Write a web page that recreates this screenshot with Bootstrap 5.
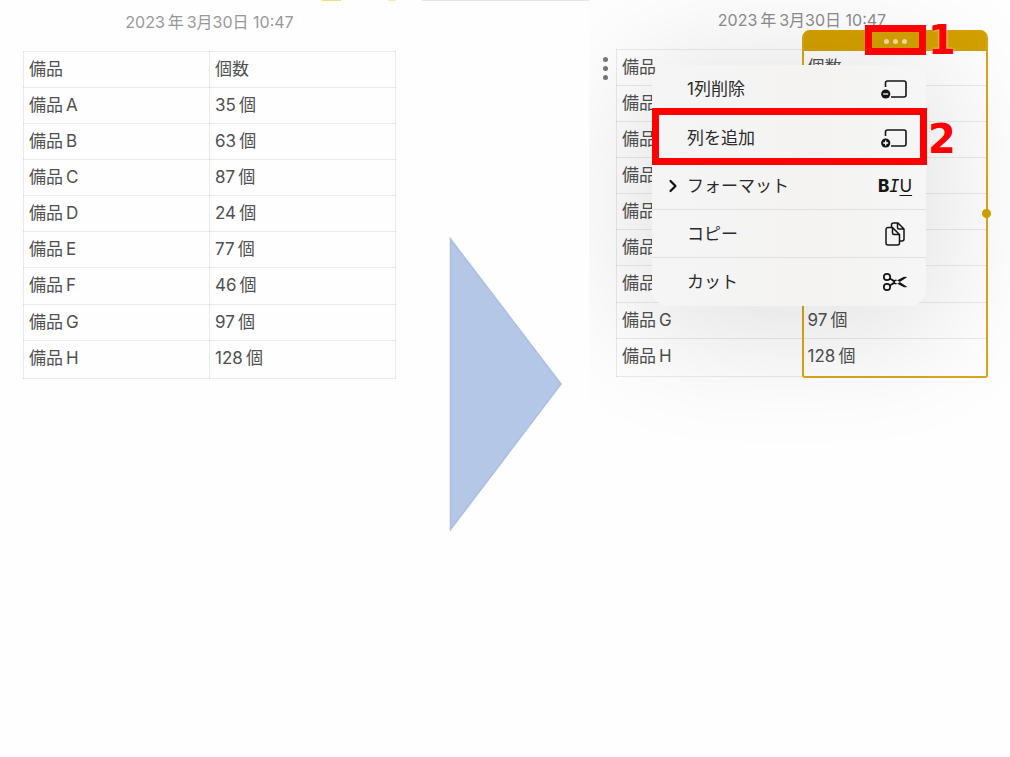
<!DOCTYPE html>
<html lang="ja">
<head>
<meta charset="utf-8">
<meta name="viewport" content="width=device-width, initial-scale=1">
<title>表に列を追加する</title>
<link href="https://cdn.jsdelivr.net/npm/bootstrap@5.3.0/dist/css/bootstrap.min.css" rel="stylesheet">
<style>
  body { font-family: Inter, "Noto Sans CJK JP", sans-serif; font-size: 17px; line-height: 24px; color: #505050; background: #fefefe; }
  .steps { display: grid; grid-template-columns: 422fr 167fr 421fr; min-height: 100vh; }
  .note-before { padding: 0 26px 0 23px; }
  .note-after { padding: 0 22px 0 27px; }
  .note-date { font-size: 16px; color: #98989a; line-height: 24px; padding: 10px 0 17px; }
  .note-after .note-date { padding: 8px 0 17px; color: #8c8c8e; }
  .toolbar-edge { height: 1px; right: 26px; gap: 47px; }
  .toolbar-edge span { width: 19px; background: #f5dc7c; }
  .toolbar-edge span + span { width: 8px; background: #fbe6b4; }
  .sheet { table-layout: fixed; border-collapse: collapse; width: 100%; color: inherit; }
  .sheet th, .sheet td { height: 36px; padding: 0 5px 2px; border: 1px solid rgba(0,0,0,.08); font-weight: 400; vertical-align: middle; }
  .sheet tbody tr:nth-child(6) td { height: 37px; }
  .sheet tr:last-child td { height: 38px; padding-bottom: 4px; }
  .divider-edge { border-top: 1px solid #e6e6e6; }
  .arrow { margin: 235px 27px 0 27px; }
  .arrow svg { display: block; width: 100%; height: 298px; }
  .col-frame { top: -19px; bottom: -1px; left: 50%; right: 0; border: 2px solid #d9a61a; border-radius: 8px 8px 3px 3px; }
  .col-head { height: 19px; background: #d4a000; border: 0; padding: 0; border-radius: 6px 6px 0 0; box-shadow: 0 -2px 0 #d4a000; gap: 4px; }
  .col-head i { width: 5px; height: 5px; border-radius: 50%; background: #f0dfa0; }
  .col-knob { width: 9px; height: 9px; right: -5px; top: 177px; border-radius: 50%; background: #d4a000; }
  .row-handle { left: -13px; top: 8px; gap: 4px; background: none; border: 0; padding: 0; }
  .row-handle i { width: 5px; height: 5px; border-radius: 50%; background: #77777b; }
  .edit-menu { top: 65px; left: 63px; right: 84px; border-radius: 17px; background: linear-gradient(90deg, #f5f5f5, #f4f3f2 60%, #f6f6f6); box-shadow: 0 14px 120px 20px rgba(0,0,0,.11); color: #2a2a2a; }
  .edit-menu button { height: 48px; padding: 0 11px 0 15px; border: 0; background: none; color: inherit; text-align: left; }
  .edit-menu button:last-of-type { height: 49px; }
  .edit-menu button + button { border-top: 1px solid #e0e0e0; }
  .edit-menu .chev { width: 20px; }
  .edit-menu .glyph { width: 40px; color: #151515; }
  .edit-menu .glyph svg { display: block; }
  .biu { white-space: nowrap; font-size: 17px; }
  .biu b { font-weight: 800; }
  .biu em { font-family: "DejaVu Sans Mono", monospace; }
  .biu u { text-underline-offset: 3px; }
  .callout { border: 7px solid #f00; pointer-events: none; }
  .callout b { position: absolute; left: 100%; font: 700 40px/40px "DejaVu Sans", sans-serif; color: #f00; text-shadow: 0 0 2px #fff; }
  .callout-1 { width: 61px; height: 30px; top: 25px; right: 84px; }
  .callout-1 b { top: -12px; margin-left: 9px; }
  .callout-2 { height: 57px; top: 43px; left: 0; right: -1px; }
  .callout-2 b { top: 4px; margin-left: 8px; }
</style>
</head>
<body>
<main class="steps">
  <section class="note-before position-relative">
    <div class="toolbar-edge position-absolute top-0 d-flex"><span></span><span></span></div>
    <div class="note-date text-center">2023&#8201;年&#8201;3月30日 10:47</div>
    <table class="sheet">
      <thead><tr><th scope="col">備品</th><th scope="col">個数</th></tr></thead>
      <tbody>
        <tr><td>備品&#8201;A</td><td>35&#8201;個</td></tr>
        <tr><td>備品&#8201;B</td><td>63&#8201;個</td></tr>
        <tr><td>備品&#8201;C</td><td>87&#8201;個</td></tr>
        <tr><td>備品&#8201;D</td><td>24&#8201;個</td></tr>
        <tr><td>備品&#8201;E</td><td>77&#8201;個</td></tr>
        <tr><td>備品&#8201;F</td><td>46&#8201;個</td></tr>
        <tr><td>備品&#8201;G</td><td>97&#8201;個</td></tr>
        <tr><td>備品&#8201;H</td><td>128&#8201;個</td></tr>
      </tbody>
    </table>
  </section>

  <div class="divider-edge">
    <div class="arrow">
      <svg viewBox="0 0 113 298" preserveAspectRatio="none" aria-hidden="true"><path d="M1.5 3 112 148 1.5 293.500Z" fill="#b4c7e7" stroke="#a9bfe4" stroke-width="1.500"/></svg>
    </div>
  </div>

  <section class="note-after position-relative overflow-hidden">
    <div class="note-date text-center">2023&#8201;年&#8201;3月30日 10:47</div>
    <div class="position-relative">
      <table class="sheet">
        <thead><tr><th scope="col">備品</th><th scope="col">個数</th></tr></thead>
        <tbody>
          <tr><td>備品&#8201;A</td><td>35&#8201;個</td></tr>
          <tr><td>備品&#8201;B</td><td>63&#8201;個</td></tr>
          <tr><td>備品&#8201;C</td><td>87&#8201;個</td></tr>
          <tr><td>備品&#8201;D</td><td>24&#8201;個</td></tr>
          <tr><td>備品&#8201;E</td><td>77&#8201;個</td></tr>
          <tr><td>備品&#8201;F</td><td>46&#8201;個</td></tr>
          <tr><td>備品&#8201;G</td><td>97&#8201;個</td></tr>
          <tr><td>備品&#8201;H</td><td>128&#8201;個</td></tr>
        </tbody>
      </table>
      <button type="button" class="row-handle position-absolute d-flex flex-column" aria-label="行の操作"><i></i><i></i><i></i></button>
      <div class="col-frame position-absolute">
        <button type="button" class="col-head w-100 d-flex justify-content-center align-items-center" aria-label="列の操作"><i></i><i></i><i></i></button>
        <span class="col-knob position-absolute"></span>
      </div>
    </div>

    <div class="edit-menu position-absolute d-flex flex-column">
      <button type="button" class="d-flex align-items-center">
        <span class="chev"></span><span class="flex-grow-1">1列削除</span>
        <span class="glyph d-flex justify-content-center"><svg width="28" height="22" viewBox="0 0 28 22" fill="none"><path d="M4.500 9V5a2 2 0 0 1 2-2H23a2 2 0 0 1 2 2v12a2 2 0 0 1-2 2H10" stroke="currentColor" stroke-width="1.600"/><circle cx="4.700" cy="16" r="4.600" fill="currentColor"/><path d="M2.200 16h5" stroke="#fff" stroke-width="1.300"/></svg></span>
      </button>
      <button type="button" class="d-flex align-items-center">
        <span class="chev"></span><span class="flex-grow-1">列を追加</span>
        <span class="glyph d-flex justify-content-center"><svg width="28" height="22" viewBox="0 0 28 22" fill="none"><path d="M4.500 9V5a2 2 0 0 1 2-2H23a2 2 0 0 1 2 2v12a2 2 0 0 1-2 2H10" stroke="currentColor" stroke-width="1.600"/><circle cx="4.700" cy="16" r="4.600" fill="currentColor"/><path d="M2.200 16h5M4.700 13.500v5" stroke="#fff" stroke-width="1.300"/></svg></span>
      </button>
      <button type="button" class="d-flex align-items-center">
        <span class="chev"><svg width="12" height="14" viewBox="0 0 12 14" fill="none" class="d-block"><path d="M3.500 2l5 5-5 5" stroke="#111" stroke-width="2.200" stroke-linecap="round" stroke-linejoin="round"/></svg></span><span class="flex-grow-1">フォーマット</span>
        <span class="glyph biu d-flex justify-content-center"><b>B</b><em>I</em><u>U</u></span>
      </button>
      <button type="button" class="d-flex align-items-center">
        <span class="chev"></span><span class="flex-grow-1">コピー</span>
        <span class="glyph d-flex justify-content-center"><svg width="22" height="26" viewBox="0 0 22 26" fill="none" stroke="currentColor" stroke-width="1.500" stroke-linejoin="round"><path d="M7.500 6V4a2 2 0 0 1 2-2H14l6 6v10a2 2 0 0 1-2 2h-2.500M13.500 2.500v4A1.500 1.500 0 0 0 15 8h5"/><path d="M2 8.500a2 2 0 0 1 2-2h4.500l7 7V22a2 2 0 0 1-2 2H4a2 2 0 0 1-2-2ZM8.500 7v5A1.500 1.500 0 0 0 10 13.500h5"/></svg></span>
      </button>
      <button type="button" class="d-flex align-items-center">
        <span class="chev"></span><span class="flex-grow-1">カット</span>
        <span class="glyph d-flex justify-content-center"><svg width="26" height="22" viewBox="0 0 26 22" fill="none" stroke="currentColor" stroke-width="1.700"><circle cx="5" cy="6" r="3.200"/><circle cx="5" cy="16" r="3.200"/><path d="M7.800 7.500 13 10.500M7.800 14.500 13 11.500"/><path d="M9.500 12.200 21.500 6q2.500-.8 3.500.3L14 13.500ZM9.500 9.800 21.500 16q2.500.8 3.500-.3L14 8.500Z" fill="currentColor" stroke="none"/></svg></span>
      </button>
      <div class="callout callout-2 position-absolute"><b>2</b></div>
    </div>
    <div class="callout callout-1 position-absolute"><b>1</b></div>
  </section>
</main>
<script src="https://cdn.jsdelivr.net/npm/bootstrap@5.3.0/dist/js/bootstrap.bundle.min.js"></script>
</body>
</html>
